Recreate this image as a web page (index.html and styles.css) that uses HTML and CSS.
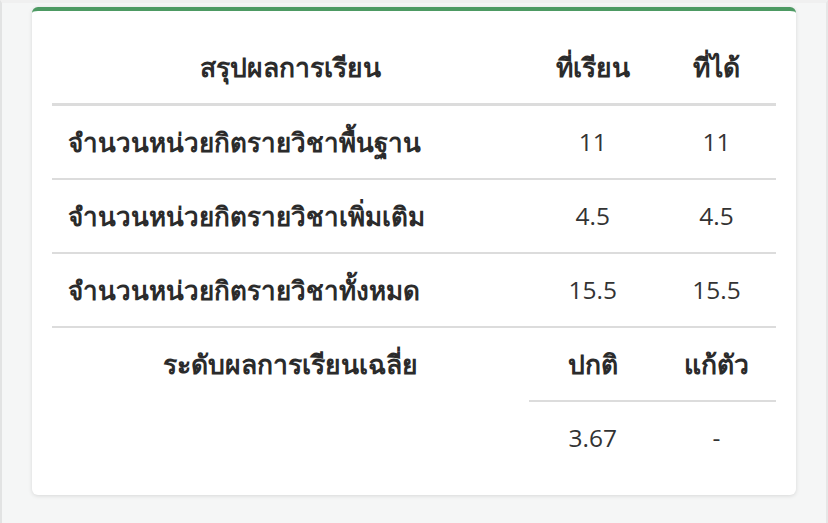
FILE: index.html
```html
<!DOCTYPE html>
<html lang="th">
<head>
<meta charset="utf-8">
<title>สรุปผลการเรียน</title>
<link rel="stylesheet" href="styles.css">
</head>
<body>
<div class="frame">
  <div class="card">
    <table class="summary">
      <colgroup>
        <col class="c-label">
        <col class="c-num">
        <col class="c-num2">
      </colgroup>
      <thead>
        <tr>
          <th>สรุปผลการเรียน</th>
          <th>ที่เรียน</th>
          <th>ที่ได้</th>
        </tr>
      </thead>
      <tbody>
        <tr>
          <td class="label">จำนวนหน่วยกิตรายวิชาพื้นฐาน</td>
          <td>11</td>
          <td>11</td>
        </tr>
        <tr>
          <td class="label">จำนวนหน่วยกิตรายวิชาเพิ่มเติม</td>
          <td>4.5</td>
          <td>4.5</td>
        </tr>
        <tr>
          <td class="label">จำนวนหน่วยกิตรายวิชาทั้งหมด</td>
          <td>15.5</td>
          <td>15.5</td>
        </tr>
        <tr>
          <th rowspan="2" class="gpa-label">ระดับผลการเรียนเฉลี่ย</th>
          <th>ปกติ</th>
          <th>แก้ตัว</th>
        </tr>
        <tr class="gpa-row">
          <td>3.67</td>
          <td>-</td>
        </tr>
      </tbody>
    </table>
  </div>
</div>
</body>
</html>
```
FILE: styles.css
```css
html, body {
  margin: 0;
  padding: 0;
}
body {
  background: #f5f6f6;
  font-family: "Open Sans", "Noto Sans", sans-serif;
  color: #333;
}
.frame {
  height: 523px;
  box-sizing: border-box;
  border-left: 2px solid #e2e3e3;
  border-right: 2px solid #e6e6e6;
  border-top: 3px solid #f0f0f0;
  padding: 4px 30px 0 30px;
}
.card {
  width: 764px;
  box-sizing: border-box;
  background: #fff;
  border-top: 4px solid #4d9a63;
  border-radius: 6px;
  box-shadow: 0 1px 4px rgba(0, 0, 0, 0.12);
  padding: 20px 20px 21px 20px;
}
.summary {
  width: 100%;
  border-collapse: collapse;
  font-size: 24.5px;
  line-height: 34px;
}
.c-label { width: 476px; }
.c-num { width: 128px; }
.c-num2 { width: 119px; }
.summary th,
.summary td {
  padding: 19px 16px;
  text-align: center;
  vertical-align: middle;
  height: 34px;
}
.summary th {
  font-weight: 700;
  font-size: 26.5px;
  color: #2b2b2b;
}
.summary thead th {
  border-bottom: 3px solid #dcdcdc;
}
.summary tbody tr + tr td,
.summary tbody tr + tr th {
  border-top: 2px solid #dcdcdc;
}
.summary td.label {
  text-align: left;
  font-weight: 700;
  font-size: 26px;
  color: #2b2b2b;
}
.summary th.gpa-label {
  vertical-align: top;
}
```
